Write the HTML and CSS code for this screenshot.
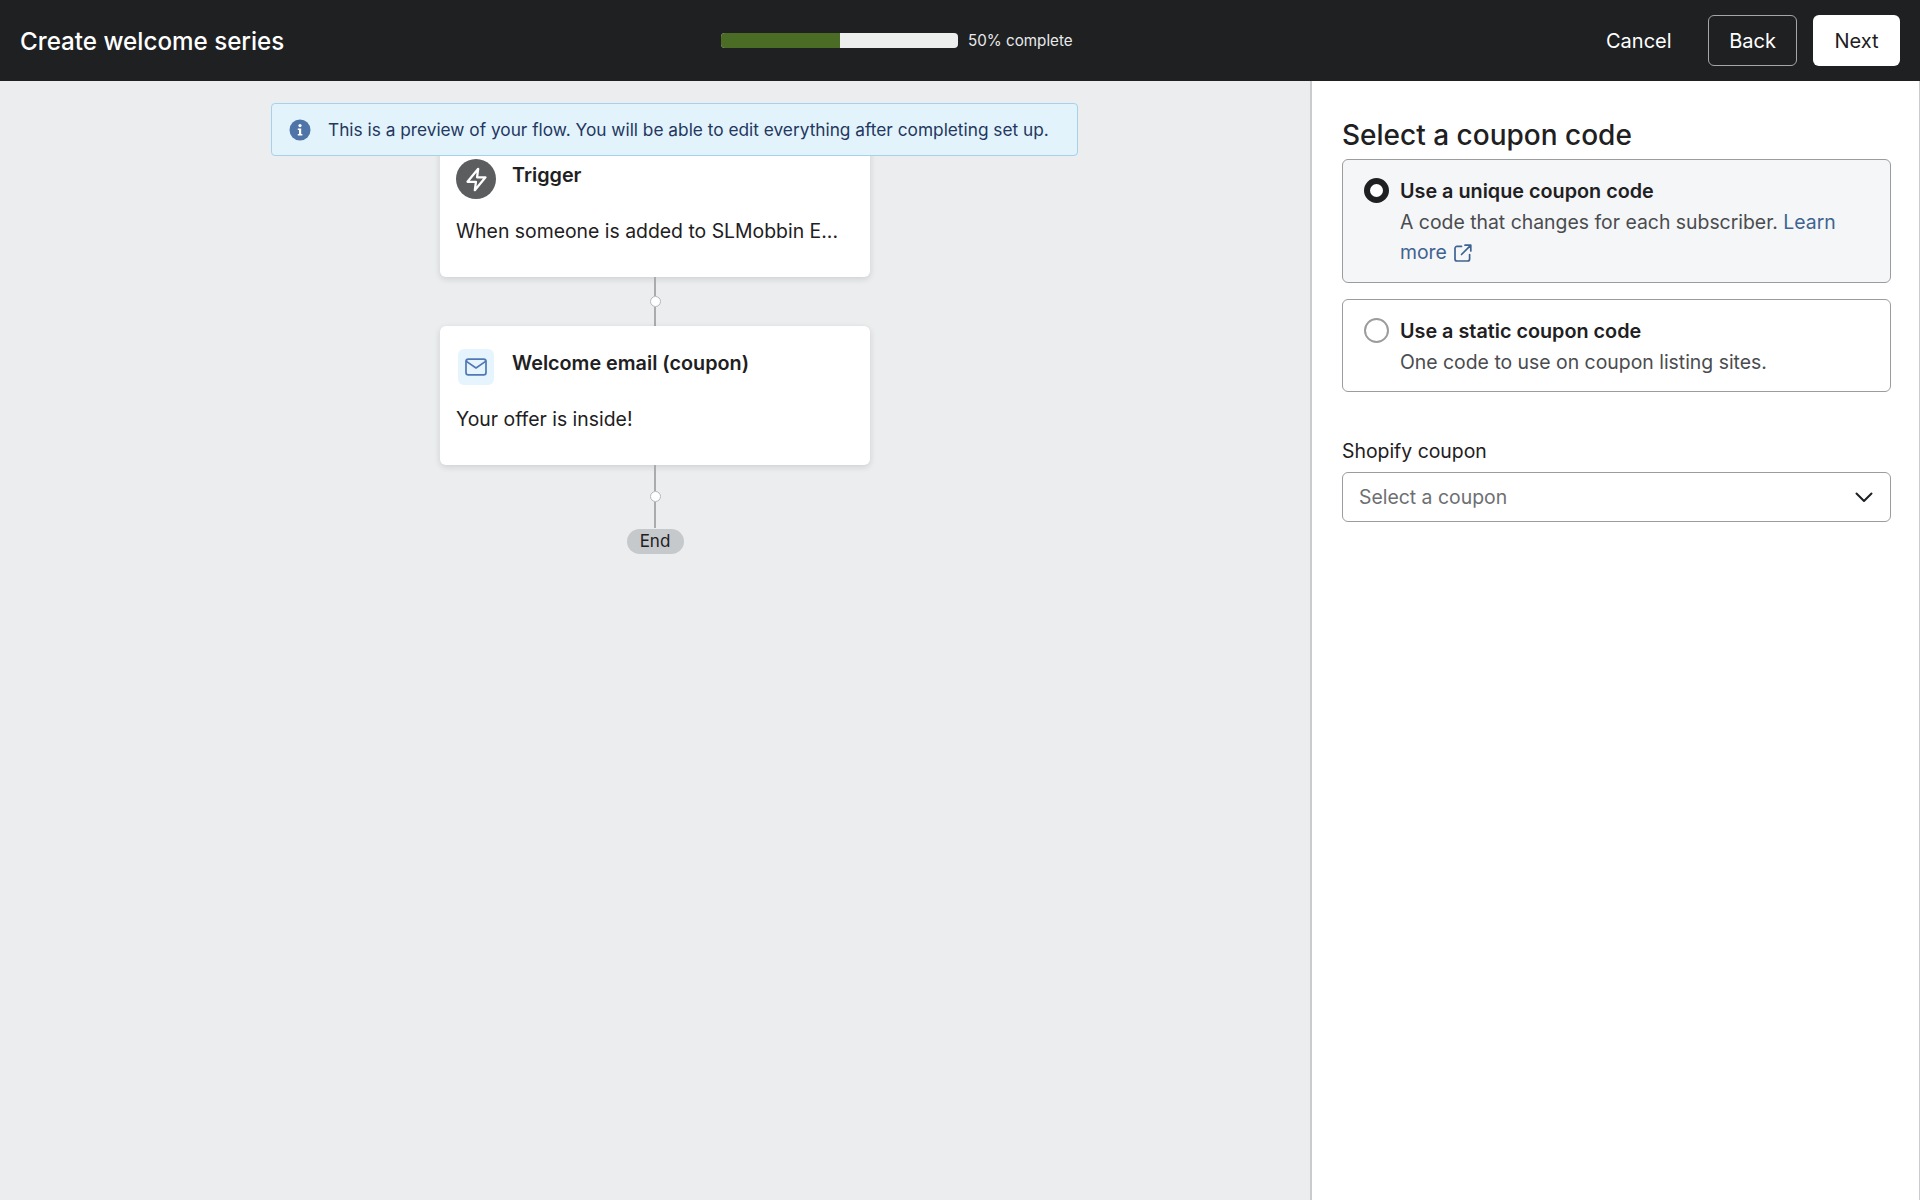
FILE: index.html
```html
<!DOCTYPE html>
<html lang="en">
<head>
<meta charset="utf-8">
<title>Create welcome series</title>
<link rel="stylesheet" href="styles.css">
</head>
<body>
<header class="topbar">
  <h1 class="flow-title">Create welcome series</h1>
  <div class="progress">
    <div class="progress-track"><div class="progress-fill"></div></div>
    <span class="progress-label">50% complete</span>
  </div>
  <div class="actions">
    <button class="btn btn-plain">Cancel</button>
    <button class="btn btn-outline">Back</button>
    <button class="btn btn-solid">Next</button>
  </div>
</header>
<main class="workspace">
  <section class="canvas">
    <div class="banner">
      <svg class="banner-icon" viewBox="0 0 22 22" aria-hidden="true">
        <circle cx="11" cy="11" r="10.5" fill="#4f74a8"/>
        <circle cx="11" cy="6.6" r="1.6" fill="#fff"/>
        <path d="M8.8 9.4h3.4v5.6h1.2v1.6H8.8V15H10v-4H8.8z" fill="#fff"/>
      </svg>
      <span>This is a preview of your flow. You will be able to edit everything after completing set up.</span>
    </div>
    <article class="card">
      <div class="card-head">
        <span class="icon-slot">
          <span class="trigger-icon">
            <svg viewBox="0 0 24 24" width="27" height="27" fill="none" stroke="#fff" stroke-width="2" stroke-linejoin="round" aria-hidden="true"><path d="M13.5 2.5 4 14h7.5l-1 7.5L20 10h-7.5z"/></svg>
          </span>
        </span>
        <h2 class="card-title">Trigger</h2>
      </div>
      <p class="card-text">When someone is added to SLMobbin E...</p>
    </article>
    <div class="connector">
      <span class="line line-a"></span><span class="dot"></span><span class="line line-a"></span>
    </div>
    <article class="card">
      <div class="card-head">
        <span class="icon-slot">
          <span class="mail-icon">
            <svg viewBox="0 0 22 18" width="22" height="18" fill="none" stroke="#4f78b4" stroke-width="1.7" stroke-linejoin="round" stroke-linecap="round" aria-hidden="true"><rect x="1" y="1.2" width="20" height="15.6" rx="2.4"/><path d="M1.4 3.4 11 10l9.6-6.6"/></svg>
          </span>
        </span>
        <h2 class="card-title">Welcome email (coupon)</h2>
      </div>
      <p class="card-text">Your offer is inside!</p>
    </article>
    <div class="connector">
      <span class="line line-b"></span><span class="dot"></span><span class="line line-b"></span>
    </div>
    <div class="end-pill">End</div>
  </section>
  <aside class="panel">
    <h2 class="panel-title">Select a coupon code</h2>
    <div class="option option-on">
      <span class="radio radio-on"></span>
      <div class="option-body">
        <div class="option-title">Use a unique coupon code</div>
        <p class="option-text">A code that changes for each subscriber. <a class="link" href="#">Learn more <svg class="ext-icon" viewBox="0 0 18 18" width="18" height="18" fill="none" stroke="#3f6390" stroke-width="1.7" stroke-linecap="round" stroke-linejoin="round" aria-hidden="true"><path d="M7.5 2.4H3a2 2 0 0 0-2 2V15a2 2 0 0 0 2 2h10.6a2 2 0 0 0 2-2v-4.5"/><path d="M7.5 10.5 16.6 1.4M11 1.2h5.8V7"/></svg></a></p>
      </div>
    </div>
    <div class="option">
      <span class="radio"></span>
      <div class="option-body">
        <div class="option-title">Use a static coupon code</div>
        <p class="option-text">One code to use on coupon listing sites.</p>
      </div>
    </div>
    <div class="field">
      <div class="field-label">Shopify coupon</div>
      <div class="select">
        <span>Select a coupon</span>
        <svg viewBox="0 0 18 11" width="18" height="11" fill="none" stroke="#1e2022" stroke-width="2" stroke-linecap="round" stroke-linejoin="round" aria-hidden="true"><path d="M1.5 1.5 9 9l7.5-7.5"/></svg>
      </div>
    </div>
  </aside>
</main>
</body>
</html>
```
FILE: styles.css
```css
* { box-sizing: border-box; }
html, body { height: 100%; }
body {
  margin: 0;
  height: 1200px;
  display: flex;
  flex-direction: column;
  overflow: hidden;
  font-family: Inter, "Liberation Sans", sans-serif;
  color: #1e2022;
  background: #ebedee;
}
.topbar {
  height: 81px;
  flex: none;
  display: flex;
  align-items: center;
  padding: 0 20px;
  background: #1e2022;
  color: #fff;
  position: relative;
}
.flow-title { margin: 1px 0 0; font-size: 24.2px; font-weight: 500; flex: 0 0 701px; }
.progress { display: flex; align-items: center; gap: 10px; }
.progress-track { width: 237px; height: 15px; border-radius: 4px; background: #eceded; overflow: hidden; }
.progress-fill { width: 50%; height: 100%; background: #4a6c25; }
.progress-label { font-size: 15.2px; color: #e8e9ea; }
.actions { margin-left: auto; display: flex; align-items: center; }
.btn { height: 51px; padding: 0; border-radius: 6px; font: 400 20px Inter, "Liberation Sans", sans-serif; border: 1px solid transparent; text-align: center; }
.btn-plain { width: 65px; background: transparent; color: #fff; margin-right: 38px; }
.btn-outline { width: 89px; background: transparent; color: #fff; border-color: #a4a6a8; margin-right: 16px; }
.btn-solid { width: 87px; background: #fff; color: #1e2022; }
.workspace { flex: 1; display: flex; min-height: 0; }
.canvas { width: 1310px; flex: none; position: relative; display: flex; flex-direction: column; align-items: center; padding-top: 57px; overflow: hidden; }
.banner { position: absolute; left: 271px; top: 22px; width: 807px; height: 53px; display: flex; align-items: center; gap: 17px; padding-left: 17px; background: #e2f3fc; border: 1px solid #a5d2ea; border-radius: 4px; font-size: 17.27px; color: #23375f; z-index: 2; white-space: nowrap; }
.banner-icon { width: 22px; height: 22px; flex: none; }
.card { width: 430px; height: 139px; flex: none; padding: 21px 16px 0; background: #fff; border-radius: 6px; box-shadow: 0 2px 6px rgba(30, 32, 34, .14); }
.card-head { display: flex; gap: 16px; align-items: flex-start; }
.icon-slot { width: 40px; height: 40px; flex: none; display: flex; align-items: center; justify-content: center; }
.trigger-icon { width: 40px; height: 40px; border-radius: 50%; background: #5c5d5f; display: flex; align-items: center; justify-content: center; }
.mail-icon { width: 36px; height: 36px; border-radius: 6px; background: #e6f4fd; display: flex; align-items: center; justify-content: center; }
.card-title { margin: 3.5px 0 0; font-size: 19.8px; line-height: 24px; font-weight: 600; }
.card-text { margin: 17.5px 0 0; font-size: 19.4px; line-height: 28px; white-space: nowrap; }
.connector { display: flex; flex-direction: column; align-items: center; flex: none; }
.line { width: 2px; background: #a9abad; display: block; }
.line-a { height: 19px; }
.line-b { height: 26px; }
.dot { width: 11px; height: 11px; flex: none; border-radius: 50%; background: #fff; border: 1.5px solid #b5b7b9; }
.end-pill { width: 57px; height: 25px; flex: none; margin-top: 1px; border-radius: 13px; background: #c6c9cb; font-size: 17px; line-height: 25px; text-align: center; }
.panel { flex: 1; background: #fff; border-left: 2px solid #c9cbcd; border-right: 1px solid #c9cbcd; padding: 36px 28px 0 30px; display: flex; flex-direction: column; }
.panel-title { margin: 0 0 5px; font-size: 28px; line-height: 37px; font-weight: 500; }
.option { display: flex; gap: 10px; padding: 17px 21px 0 21px; border: 1px solid #9a9c9e; border-radius: 6px; margin-bottom: 16px; height: 93px; }
.option-on { background: #f4f6f8; height: 124px; }
.radio { width: 25px; height: 25px; flex: none; border-radius: 50%; border: 2.5px solid #9a9c9e; background: #fff; margin-top: 1px; }
.radio-on { border: 6.5px solid #1e2022; }
.option-body { min-width: 0; margin-left: 1px; }
.option-title { font-size: 19.8px; line-height: 28px; font-weight: 600; }
.option-text { margin: 1.5px 0 0; font-size: 19.4px; line-height: 30.5px; color: #4a4c4f; }
.link { color: #3f6390; text-decoration: none; }
.ext-icon { vertical-align: -3px; margin-left: 2px; }
.field { margin-top: 29px; }
.field-label { font-size: 19.4px; line-height: 28px; margin-bottom: 7px; }
.select { height: 50px; display: flex; align-items: center; justify-content: space-between; padding: 0 17px 0 16px; border: 1px solid #9a9c9e; border-radius: 6px; font-size: 19.4px; color: #6d6f72; }
```
